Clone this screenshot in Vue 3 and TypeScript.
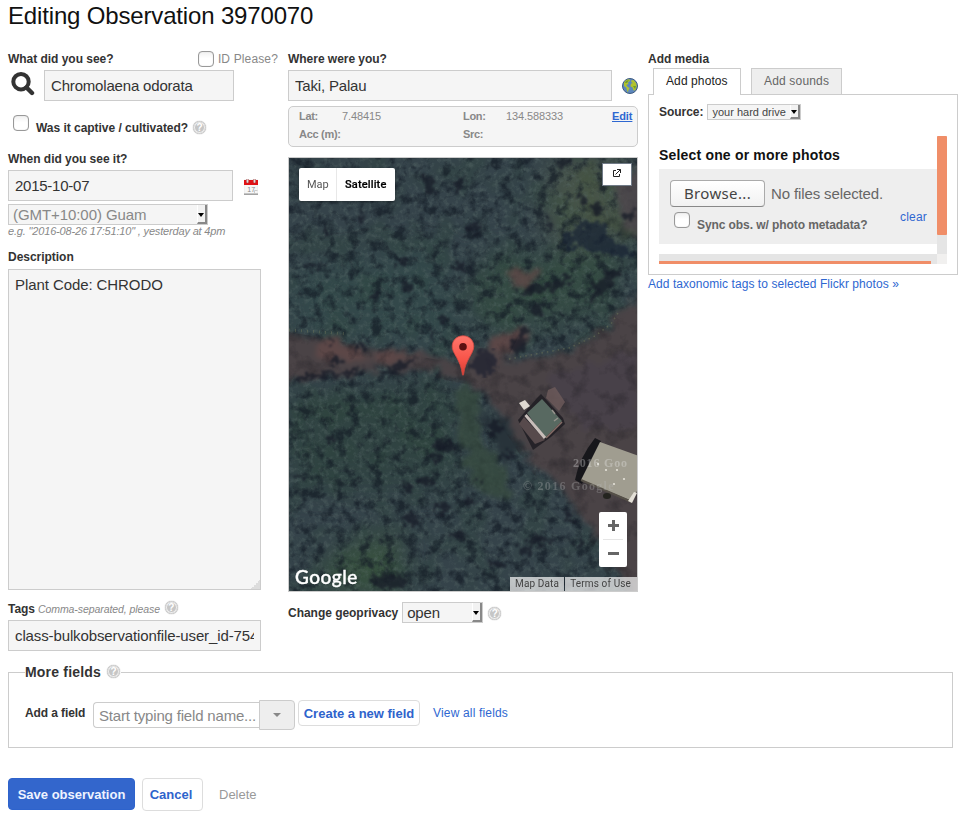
<script setup lang="ts">
import { ref } from 'vue'

const species = ref('Chromolaena odorata')
const place = ref('Taki, Palau')
const observedOn = ref('2015-10-07')
const description = ref('Plant Code: CHRODO')
const tags = ref('class-bulkobservationfile-user_id-7547')
const fieldName = ref('')
const idPlease = ref(false)
const captive = ref(false)
const syncMetadata = ref(false)

// Isolated dark tree shadows: x, y, rx, ry
const shadows = [
  [140, 26, 7, 8], [170, 26, 4, 10], [185, 70, 6, 5], [38, 74, 4, 5], [74, 59, 5, 3], [86, 139, 4, 4],
  [119, 129, 5, 6], [172, 110, 8, 6], [25, 108, 9, 3], [112, 104, 6, 4], [153, 162, 4, 4], [143, 176, 3, 6],
  [72, 189, 5, 5], [41, 184, 3, 3], [47, 203, 7, 3], [293, 40, 5, 4], [307, 52, 7, 5], [262, 67, 4, 4],
  [340, 58, 5, 5], [276, 4, 5, 4], [247, 153, 7, 5], [229, 188, 7, 8], [235, 176, 4, 6], [154, 288, 12, 7],
  [146, 300, 6, 4], [43, 281, 6, 3], [205, 270, 7, 8], [220, 298, 9, 4], [137, 324, 9, 5], [118, 328, 4, 5],
  [178, 343, 10, 3], [122, 362, 6, 8], [170, 378, 9, 4], [250, 382, 13, 5], [236, 392, 6, 5], [100, 423, 20, 7],
  [10, 318, 8, 3], [280, 358, 5, 5], [292, 385, 4, 5], [208, 405, 8, 4], [155, 350, 7, 5], [192, 325, 3, 5],
]
const roofSpots = [[317, 312], [328, 312], [325, 326], [335, 321], [309, 306]]
</script>

<template>
  <main class="page">
    <h1>Editing Observation 3970070</h1>

    <div class="columns">
      <section class="col">
        <div class="head split">
          <label>What did you see?</label>
          <label class="idplease"><input v-model="idPlease" type="checkbox" />ID Please?</label>
        </div>
        <div class="taxon">
          <svg class="search" width="24" height="24" viewBox="0 0 24 24">
            <circle cx="10" cy="9.7" r="7.7" fill="none" stroke="#333" stroke-width="4" />
            <path d="M15.5 15.5 L21 21" stroke="#333" stroke-width="4.4" stroke-linecap="round" />
          </svg>
          <input v-model="species" class="text taxon-input" />
        </div>
        <div class="captive">
          <input v-model="captive" type="checkbox" />
          <label>Was it captive / cultivated?</label>
          <i class="help">?</i>
        </div>
        <div class="head when"><label>When did you see it?</label></div>
        <div class="date">
          <input v-model="observedOn" class="text date-input" />
          <svg width="14" height="16" viewBox="0 0 14 16">
            <rect x="0" y="1" width="14" height="14" fill="#f7f7f7" stroke="#ddd" stroke-width=".5" />
            <rect x="0" y="1" width="14" height="5" fill="#e01216" />
            <rect x="2.3" y="0" width="2.4" height="4" rx="1" fill="#ddd" stroke="#a33" stroke-width=".5" />
            <rect x="9.3" y="0" width="2.4" height="4" rx="1" fill="#ddd" stroke="#a33" stroke-width=".5" />
            <text x="3.3" y="12.5" font-size="7" font-family="Liberation Sans, sans-serif" fill="#888">17</text>
            <path d="M10.5 14 V11.5 H13.5" fill="none" stroke="#ccc" />
            <path d="M0 15.2 H14" stroke="#999" stroke-width="1.4" />
          </svg>
        </div>
        <div class="select zone"><span>(GMT+10:00) Guam</span><b class="arrow"></b></div>
        <p class="hint">e.g. "2016-08-26 17:51:10" , yesterday at 4pm</p>
        <div class="head desc"><label>Description</label></div>
        <div class="area-wrap">
          <textarea v-model="description" class="text"></textarea>
          <svg class="grip" width="9" height="9" viewBox="0 0 9 9"><path d="M9 0v9H0v-1h1V7h2V5h2V3h2V1h1V0z" fill="#ddd" /></svg>
        </div>
        <div class="tags-head">
          <label>Tags</label><em>Comma-separated, please</em><i class="help">?</i>
        </div>
        <input v-model="tags" class="text tags-input" />
      </section>

      <section class="col">
        <div class="head"><label>Where were you?</label></div>
        <div class="place">
          <input v-model="place" class="text place-input" />
          <svg width="16" height="16" viewBox="0 0 16 16">
            <circle cx="8" cy="8" r="7.5" fill="#5d87bd" stroke="#3d5a80" />
            <path d="M2 4.5 Q4 1.2 7.5 1.2 L8 3 L6 4.2 L6.5 6 L4.2 7 L5.8 9 L7.6 10 L6.4 12.2 L6 14.4 L4.8 12 L4.4 9.8 L2 8 Z M9 2.5 L11.5 2.1 L14 5 L14.8 8.2 L13.3 12.3 L11.6 12.6 L10.5 9.6 L8.4 8.3 L9 5.7 L11 5 L9.5 4.3 Z" fill="#b2c32c" />
            <path d="M2.6 4.8 Q4 2 7 2 L5 5Z M11 8 L14 8 L13 11Z" fill="#6f9d2d" />
          </svg>
        </div>
        <div class="coords">
          <b>Lat:</b><span>7.48415</span><b>Lon:</b><span>134.588333</span><a>Edit</a>
          <b>Acc (m):</b><span></span><b>Src:</b><span></span>
        </div>

        <div class="map">
          <svg class="imagery" width="348" height="433" viewBox="0 0 348 433">
            <defs>
              <filter id="soft-wide" x="-30%" y="-30%" width="160%" height="160%" color-interpolation-filters="sRGB"><feGaussianBlur stdDeviation="14" /></filter>
              <filter id="edge" color-interpolation-filters="sRGB"><feGaussianBlur stdDeviation=".6" /></filter>
              <filter id="ragged" x="-10%" y="-10%" width="120%" height="120%" color-interpolation-filters="sRGB">
                <feTurbulence type="fractalNoise" baseFrequency=".09" numOctaves="3" seed="5" result="t" />
                <feDisplacementMap in="SourceGraphic" in2="t" scale="22" xChannelSelector="R" yChannelSelector="G" />
                <feGaussianBlur stdDeviation="2.6" />
              </filter>
              <filter id="blot" x="-10%" y="-10%" width="120%" height="120%" color-interpolation-filters="sRGB">
                <feTurbulence type="fractalNoise" baseFrequency=".16" numOctaves="3" seed="12" result="t" />
                <feDisplacementMap in="SourceGraphic" in2="t" scale="18" xChannelSelector="R" yChannelSelector="G" />
                <feGaussianBlur stdDeviation=".8" />
              </filter>
              <filter id="clumps" x="0" y="0" width="100%" height="100%" color-interpolation-filters="sRGB">
                <feTurbulence type="fractalNoise" baseFrequency=".085" numOctaves="5" seed="8" />
                <feColorMatrix values="0 0 0 0 .07  0 0 0 0 .1  0 0 0 0 .14  3.4 0 0 0 -1.6" />
              </filter>
              <filter id="leaves" x="0" y="0" width="100%" height="100%" color-interpolation-filters="sRGB">
                <feTurbulence type="fractalNoise" baseFrequency=".2" numOctaves="4" seed="23" />
                <feColorMatrix values="0 0 0 0 .36  0 0 0 0 .43  0 0 0 0 .42  0 2.6 0 0 -1.2" />
              </filter>
              <filter id="tint" x="0" y="0" width="100%" height="100%" color-interpolation-filters="sRGB">
                <feTurbulence type="fractalNoise" baseFrequency=".03" numOctaves="2" seed="31" />
                <feColorMatrix values="0 0 0 0 .17  0 0 0 0 .3  0 0 0 0 .2  0 0 4 0 -1.8" />
              </filter>
              <filter id="grit" x="0" y="0" width="100%" height="100%" color-interpolation-filters="sRGB">
                <feTurbulence type="fractalNoise" baseFrequency=".06" numOctaves="5" seed="4" />
                <feColorMatrix values="0 0 0 0 .14  0 0 0 0 .13  0 0 0 0 .15  0 2.4 0 0 -1.15" result="n" />
                <feComposite in="n" in2="SourceGraphic" operator="in" />
              </filter>
            </defs>
            <rect width="348" height="433" fill="#35434a" />
            <g filter="url(#soft-wide)">
              <path d="M265 0H340V75L280 100L255 60Z" fill="#475449" />
              <path d="M190 100L340 90L310 160L190 175Z" fill="#344a43" />
              <path d="M0 110L150 90L180 190L0 175Z" fill="#33484a" />
              <path d="M0 240L150 220L180 330L0 330Z" fill="#304342" />
              <path d="M40 400L110 370L110 433L30 433Z" fill="#38513f" />
            </g>
            <rect width="348" height="433" filter="url(#tint)" opacity=".16" />
            <rect width="348" height="433" filter="url(#leaves)" opacity=".4" />
            <rect width="348" height="433" filter="url(#clumps)" opacity=".66" />
            <g filter="url(#ragged)">
              <path d="M324 14L362 10V62L346 80L330 56Z" fill="#4d464b" opacity=".8" />
              <path d="M290 10L304 4L312 50L345 70V82L300 64Z" fill="#46533f" opacity=".5" />
              <path d="M-20 173L28 180L70 190L125 194L176 205L200 186L240 168L238 185L215 206L280 192L322 170L330 155L370 132V460L340 433L310 380L270 328L240 300L216 262L192 232L172 220L150 213L90 210L40 219L-20 225Z" fill="#4a4346" />
              <path d="M28 180L66 186L80 206L30 202ZM85 193L128 194L122 204L85 205ZM202 180L235 168L230 186L205 200ZM222 114L250 114L242 126L225 127Z" fill="#604947" opacity=".8" />
              <path d="M255 220L348 192V270L300 270L275 245Z" fill="#484149" />
              <path d="M174 222L190 238L196 290L218 312L222 338L200 340L184 325L168 270L168 234Z" fill="#374b3f" opacity=".75" />
              <path d="M196 254L216 262L232 290L214 300L206 290Z" fill="#28333a" />
            </g>
            <path d="M0 174L176 207L235 168L215 207L280 188L348 140V433H330L240 310L186 228L90 208L0 223Z" fill="#fff" filter="url(#grit)" opacity=".55" />
            <g filter="url(#blot)" fill="#161a26" opacity=".72">
              <ellipse v-for="(s, i) in shadows" :key="i" :cx="s[0]" :cy="s[1]" :rx="s[2]" :ry="s[3]" />
              <path d="M273 80L290 66L312 64L322 82L340 90L346 100L320 96L296 92L290 84L278 96Z" fill="#182334" />
              <path d="M0 222L20 216L75 211L74 216L20 221L0 227ZM92 216L112 202L126 200L126 204L108 214L94 221ZM226 136L245 126L262 126L280 116L286 122L262 132L238 138ZM302 128L318 114L334 110L330 120L312 138L300 148Z" />
            </g>
            <g filter="url(#blot)"><ellipse cx="195" cy="205" rx="13" ry="12" fill="#252632" opacity=".85" /></g>
            <g filter="url(#edge)">
              <path d="M220 201L280 190L306 178L322 166L329 155" fill="none" stroke="#6b7258" stroke-width="1.6" stroke-dasharray="1.5 4" opacity=".55" />
              <path d="M0 172L60 176" stroke="#6b7258" stroke-width="3" stroke-dasharray="1 5" opacity=".5" />
              <path d="M248 240L252 236L274 260L276 266L262 279L244 292L229 262Z" fill="#211f25" opacity=".9" />
              <path d="M235 259L256 282L246 286L230 266Z" fill="#574a4c" />
              <path d="M259 232L266 229L276 244L270 253L257 240Z" fill="#6e5b5b" opacity=".8" />
              <path d="M238 255L253 241L273 263L256 280Z" fill="#586961" />
              <path d="M236.5 257L256 280" stroke="#c8beba" stroke-width="3" />
              <path d="M273 264L257 280" stroke="#846c66" stroke-width="1.6" />
              <path d="M263 252L266 256M265 263L269 260" stroke="#94928b" stroke-width="1.5" />
              <path d="M230 245L236 242L241 248L235 252Z" fill="#ded8d1" />
              <path d="M306 280L312 283L293 326L286 322Q290 300 306 280Z" fill="#17171b" />
              <path d="M311 284L350 298V329L343 343L292 322Z" fill="#a09d90" />
              <path d="M292 322L343 344" stroke="#555048" stroke-width="2" />
              <path d="M339 343L345 334L348 335L343 345Z" fill="#e4e0d7" />
              <ellipse cx="318" cy="338" rx="4" ry="3" fill="#24241f" />
              <circle v-for="(p, i) in roofSpots" :key="i" :cx="p[0]" :cy="p[1]" r="1.1" fill="#e4e2d7" />
            </g>
            <g font-family="Liberation Serif, serif" font-size="12" font-weight="bold" opacity=".32">
              <text x="234" y="332" letter-spacing="1.3" fill="#bbb">© 2016 Google</text>
              <text x="284" y="309" letter-spacing=".8" fill="#eee">2016 Goo</text>
            </g>
          </svg>

          <svg class="pin" width="24" height="42" viewBox="0 0 24 42">
            <defs><linearGradient id="pin-fill" x1="0" y1="0" x2="0" y2="1"><stop offset="0" stop-color="#ff776c" /><stop offset=".6" stop-color="#f75449" /><stop offset="1" stop-color="#d33b31" /></linearGradient></defs>
            <path d="M12 .8C5.8 .8 1.2 5.5 1.2 11.3C1.2 19 9.8 24.5 11.4 39.5C11.5 40.6 12.5 40.6 12.6 39.5C14.2 24.5 22.8 19 22.8 11.3C22.8 5.5 18.2 .8 12 .8Z" fill="url(#pin-fill)" stroke="#d54a43" stroke-width=".8" />
            <circle cx="12" cy="11.8" r="3.8" fill="#5c1111" />
          </svg>

          <div class="map-type"><span>Map</span><b>Satellite</b></div>
          <div class="expand">
            <svg width="10" height="10" viewBox="0 0 10 10" fill="none" stroke="#222"><path d="M4 2.5H1.5V8.5H7.5V6M3.5 6.5L8.5 1.5M5 1.5H8.5V5" /></svg>
          </div>
          <div class="zoomer"><button class="plus" aria-label="Zoom in"></button><hr /><button class="minus" aria-label="Zoom out"></button></div>
          <span class="google">Google</span>
          <div class="legal"><span>Map Data</span><span>Terms of Use</span></div>
        </div>

        <div class="privacy">
          <label>Change geoprivacy</label>
          <div class="select open"><span>open</span><b class="arrow"></b></div>
          <i class="help">?</i>
        </div>
      </section>

      <section class="col">
        <div class="head"><label>Add media</label></div>
        <nav class="tabs"><span class="tab active">Add photos</span><span class="tab">Add sounds</span></nav>
        <div class="panel">
          <div class="source"><label>Source:</label><div class="select drive"><span>your hard drive</span><b class="arrow"></b></div></div>
          <div class="scroller">
            <div class="viewport">
              <h2>Select one or more photos</h2>
              <div class="upload">
                <div class="file"><button class="browse">Browse...</button><span>No files selected.</span></div>
                <div class="sync"><input v-model="syncMetadata" type="checkbox" /><label>Sync obs. w/ photo metadata?</label><a>clear</a></div>
              </div>
            </div>
            <div class="vbar"><i></i></div>
            <div class="hbar"><i></i></div>
            <div class="corner"></div>
          </div>
        </div>
        <a class="flickr">Add taxonomic tags to selected Flickr photos »</a>
      </section>
    </div>

    <fieldset>
      <legend>More fields <i class="help">?</i></legend>
      <div class="field-row">
        <label>Add a field</label>
        <div class="combo"><input v-model="fieldName" placeholder="Start typing field name..." /><button class="drop" aria-label="Show fields"><i></i></button></div>
        <button class="btn create">Create a new field</button>
        <a>View all fields</a>
      </div>
    </fieldset>

    <div class="actions">
      <button class="btn save">Save observation</button>
      <button class="btn cancel">Cancel</button>
      <a>Delete</a>
    </div>
  </main>
</template>

<style>
body { background: #fff; }
</style>

<style scoped>
* { box-sizing: border-box; }
.page { width: 973px; height: 820px; padding-left: 8px; overflow: hidden; font: 12px/18px "Liberation Sans", Arial, sans-serif; color: #333; }
h1 { margin: 0; height: 50px; font-size: 24px; line-height: 32px; font-weight: 400; color: #111; letter-spacing: -.16px; }
.columns { display: grid; grid-template-columns: 270px 350px 310px; column-gap: 10px; height: 602px; }
.col { display: flex; flex-direction: column; align-items: flex-start; }
label { font-weight: bold; letter-spacing: -.03px; }
a { color: #2e67d1; }
.head { height: 20px; flex: none; }
.split { width: 100%; display: flex; justify-content: space-between; }
.idplease { display: flex; align-items: center; gap: 4px; height: 18px; font-weight: 400; color: #888; letter-spacing: .14px; }
input[type="checkbox"] { appearance: none; flex: none; width: 16px; height: 16px; margin: 0; border: 1px solid #999; border-radius: 4px; background: linear-gradient(#f1f1f1, #fff 45%); box-shadow: inset 0 0 1px #bbb; }
.text { height: 31px; margin: 0; padding: 0 6px; border: 1px solid #ccc; border-radius: 0; background: #f5f5f5; color: #333; font: 15px "Liberation Sans", Arial, sans-serif; letter-spacing: -.18px; outline: 0; }
.taxon { display: flex; height: 45px; padding-left: 3px; gap: 9px; }
.search { margin-top: 2px; }
.taxon-input { width: 190px; }
.captive { display: flex; align-items: flex-start; height: 35px; padding-left: 5px; }
.captive label { margin: 4px 5px 0 7px; }
.captive .help { margin-top: 6px; }
.help { display: inline-flex; flex: none; align-items: center; justify-content: center; width: 13px; height: 13px; border-radius: 50%; border: 1px solid #ddd; background: #c6c6c6; box-shadow: inset 0 0 0 1px #eee, 0 0 1px #888; color: #fff; font: bold 10px/11px "Liberation Sans", sans-serif; }
.date { display: flex; align-items: flex-start; gap: 11px; height: 34px; }
.date svg { margin-top: 9px; }
.text.date-input { width: 225px; letter-spacing: -.25px; }
.select { display: flex; align-items: stretch; justify-content: space-between; border: 1px solid #ccc; background: #f5f5f5; }
.select .arrow { position: relative; width: 10px; border-right: 2px solid #888; border-bottom: 2px solid #888; border-left: 1px solid #fff; background: #f2f2f2; }
.arrow::after { content: ""; position: absolute; left: 0; top: 50%; margin-top: -1px; border: 3.5px solid transparent; border-top: 4px solid #000; border-bottom: 0; }
.zone { width: 200px; height: 21px; flex: none; padding-left: 4px; font-size: 15px; line-height: 20px; color: #888; letter-spacing: -.07px; }
.hint { margin: 0; height: 23px; font-size: 11px; line-height: 13px; font-style: italic; color: #888; letter-spacing: -.17px; }
.desc { height: 21px; }
.area-wrap { position: relative; width: 253px; height: 321px; flex: none; }
textarea.text { display: block; width: 253px; height: 321px; resize: none; padding: 6px; line-height: 18px; letter-spacing: -.08px; }
.grip { position: absolute; right: 1px; bottom: 1px; }
.tags-head { display: flex; height: 30px; padding-top: 10px; flex: none; }
.tags-head em { margin: 0 5px 0 3px; font-size: 10.5px; line-height: 19px; color: #888; letter-spacing: -.08px; }
.tags-head .help { margin-top: 1px; }
.tags-input { width: 253px; flex: none; letter-spacing: -.12px; }

.place { display: flex; gap: 10px; height: 36px; flex: none; }
.place svg { margin-top: 8px; }
.place-input { width: 324px; }
.coords { display: grid; grid-template-columns: 43px 121px 43px 106px 1fr; grid-template-rows: 18px 18px; width: 350px; height: 41px; flex: none; padding: 0 5px 0 10px; border: 1px solid #ccc; border-radius: 5px; background: #f5f5f5; color: #888; font-size: 11px; line-height: 18px; letter-spacing: -.1px; white-space: nowrap; }
.coords b { letter-spacing: -.3px; }
.coords a { font-weight: bold; font-size: 11px; text-decoration: underline; }
.map { position: relative; width: 350px; height: 435px; flex: none; margin-top: 10px; border: 1px solid #ccc; overflow: hidden; font-family: Roboto, sans-serif; }
.imagery { display: block; }
.pin { position: absolute; left: 162px; top: 177px; }
.map-type { position: absolute; left: 10px; top: 10px; display: flex; width: 96px; height: 33px; border-radius: 2px; background: #fff; font-size: 11px; line-height: 33px; color: #565656; box-shadow: 0 1px 3px #0005; }
.map-type span { width: 38px; padding-left: 8px; border-right: 1px solid #e8e8e8; }
.map-type b { flex: 1; padding-left: 8px; font-weight: 500; color: #000; letter-spacing: .15px; -webkit-text-stroke: .2px #000; }
.expand { position: absolute; left: 313px; top: 5px; display: flex; align-items: center; justify-content: center; width: 30px; height: 23px; padding-bottom: 3px; border: 1px solid #717b87; background: #fff; }
.zoomer { position: absolute; left: 310px; top: 354px; width: 28px; height: 55px; padding: 0 4px; border-radius: 2px; background: #fff; }
.zoomer button { position: relative; display: block; width: 20px; height: 27px; padding: 0; border: 0; background: none; }
.zoomer hr { height: 1px; margin: 0; border: 0; background: #e6e6e6; }
.plus::before, .minus::before, .plus::after { content: ""; position: absolute; left: 5px; top: 12px; width: 11px; height: 3px; background: #666; }
.plus::after { left: 9px; top: 8px; width: 3px; height: 11px; }
.google { position: absolute; left: 6px; top: 408px; color: #fff; font: 500 19px/22px "Lato", sans-serif; letter-spacing: .5px; -webkit-text-stroke: .4px #fff; }
.legal { position: absolute; right: 0; bottom: 0; display: flex; gap: 1px; height: 14px; font-size: 10px; line-height: 14px; color: #444; white-space: nowrap; letter-spacing: .14px; }
.legal span { padding: 0 5px; background: #f5f5f5b8; }
.legal span + span { padding-right: 6px; }
.privacy { display: flex; height: 31px; padding-top: 10px; }
.privacy label { margin-right: 4px; line-height: 23px; }
.open { width: 81px; height: 21px; padding-left: 4px; font-size: 15px; line-height: 20px; letter-spacing: -.2px; }
.privacy .help { margin: 5px 0 0 5px; }

.tabs { display: flex; gap: 10px; height: 26px; margin: -2px 0 0 5px; flex: none; }
.tab { width: 91px; height: 26px; padding: 3px 12px; border: 1px solid #ccc; border-bottom: 0; background: #eee; color: #666; line-height: 18px; white-space: nowrap; letter-spacing: .17px; }
.tab.active { position: relative; width: 88px; height: 27px; background: #fff; color: #222; letter-spacing: .1px; }
.panel { width: 310px; height: 181px; flex: none; padding: 9px 10px 0; border: 1px solid #ccc; }
.source { display: flex; height: 32px; }
.source label { margin-right: 4px; line-height: 17px; }
.drive { width: 94px; height: 16px; padding-left: 4px; font-size: 11px; line-height: 15px; color: #444; }
.scroller { display: grid; grid-template-columns: 278px 10px; grid-template-rows: 118px 10px; }
.viewport { overflow: hidden; }
h2 { height: 33px; margin: 0; padding-top: 10px; font-size: 14px; line-height: 18px; font-weight: bold; color: #111; letter-spacing: .18px; }
.upload { height: 75px; padding: 11px 10px 0 11px; background: #eee; }
.file { display: flex; gap: 6px; height: 32px; font-size: 15px; line-height: 28px; color: #666; letter-spacing: -.12px; }
.browse { width: 95px; height: 27px; padding: 0; border: 1px solid #aaa; border-bottom-color: #888; border-radius: 4px; background: linear-gradient(#fff, #f1f1f1); color: #444; font: 15px/23px "Noto Sans", sans-serif; letter-spacing: .35px; }
.sync { display: flex; padding-left: 4px; color: #666; }
.sync label { width: 170px; margin: 4px 33px 0 7px; letter-spacing: -.08px; white-space: nowrap; }
.sync a { margin-top: -4px; letter-spacing: .2px; }
.vbar { background: #e5e5e5; }
.vbar i { display: block; height: 99px; background: #f08e68; border-radius: 1px; }
.hbar { padding-top: 7px; background: #e5e5e5; }
.hbar i { display: block; width: 272px; height: 3px; background: #f08e68; }
.corner { background: #f1f0ef; }
.flickr { line-height: 18px; letter-spacing: .06px; }

fieldset { width: 945px; height: 86px; margin: 10px 0 0; padding: 0 16px; border: 1px solid #ccc; min-width: 0; }
legend { display: flex; align-items: center; gap: 6px; height: 20px; padding: 0 1px 0 0; font-size: 14px; line-height: 20px; font-weight: bold; letter-spacing: .2px; }
legend .help { margin-bottom: 2px; }
.field-row { display: flex; align-items: flex-start; padding-top: 18px; }
.field-row > label { width: 68px; margin-top: 4px; letter-spacing: -.1px; }
.combo { display: flex; align-items: flex-start; }
.combo input { width: 167px; height: 26px; margin: 2px 0 0; padding: 1px 4px 0 5px; border: 1px solid #ccc; border-right: 0; border-radius: 4px 0 0 4px; background: #fff; font: 15px "Liberation Sans", sans-serif; letter-spacing: -.18px; }
.combo input::placeholder { color: #888; }
.drop { display: flex; align-items: center; justify-content: center; width: 36px; height: 30px; margin-left: -1px; border: 1px solid #ccc; border-radius: 0 4px 4px 0; background: #eee; }
.drop i { border: 4px solid transparent; border-top-color: #888; border-bottom: 0; }
.btn { padding: 0; border: 1px solid #ddd; border-radius: 4px; background: #fff; color: #2e63cc; font: bold 13px "Liberation Sans", sans-serif; }
.create { width: 122px; height: 26px; margin: 0 13px 0 3px; }
.field-row > a { margin-top: 4px; letter-spacing: .17px; }
.actions { display: flex; align-items: flex-start; margin-top: 30px; }
.save { width: 127px; height: 32px; border-color: #2e63cc; background: #3366cc; color: #eef3ff; }
.cancel { width: 61px; height: 33px; margin: 0 16px 0 7px; padding-right: 3px; }
.actions a { font-size: 13px; line-height: 33px; color: #999; }
</style>
